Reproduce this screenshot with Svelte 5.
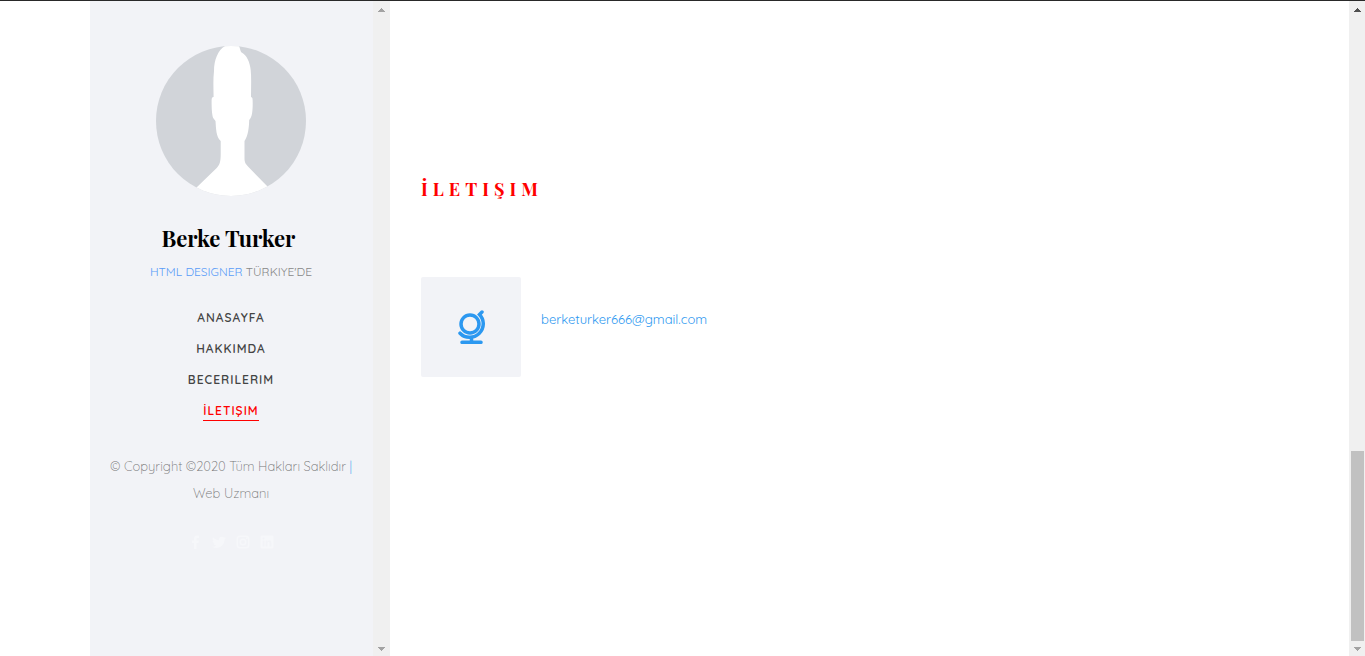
<script>
  const menu = [
    { label: 'ANASAYFA', href: '#home' },
    { label: 'HAKKIMDA', href: '#about' },
    { label: 'BECERILERIM', href: '#skills' },
    { label: 'İLETIŞIM', href: '#contact' }
  ];

  const socials = [
    { name: 'Facebook', path: 'M8.5 14V8h2l.4-2.4H8.500V4.200c0-.8.3-1.300 1.300-1.300H11V.7C10.700.6 10 .5 9.200.5 7.300.5 6 1.600 6 3.700v1.900H4V8h2v6z' },
    { name: 'Twitter', path: 'M14 3c-.5.200-1.100.4-1.600.4.6-.3 1-.9 1.200-1.500-.5.300-1.100.5-1.800.7A2.900 2.900 0 0 0 6.900 5.200C4.500 5.100 2.400 3.900 1 2.200c-.8 1.300-.4 3 .9 3.800-.5 0-.9-.1-1.300-.3 0 1.400 1 2.500 2.300 2.800-.4.1-.9.1-1.300 0 .4 1.100 1.400 2 2.700 2A5.800 5.800 0 0 1 0 11.700c5.500 3.400 12.500-.3 12.500-7.100.6-.4 1.100-1 1.500-1.600z' },
    { name: 'Instagram', path: 'M4 .5h6A3.500 3.500 0 0 1 13.500 4v6a3.500 3.500 0 0 1-3.500 3.500H4A3.500 3.500 0 0 1 .5 10V4A3.500 3.500 0 0 1 4 .5zM4 2a2 2 0 0 0-2 2v6c0 1.100.9 2 2 2h6a2 2 0 0 0 2-2V4a2 2 0 0 0-2-2zM7 3.500a3.500 3.500 0 1 1 0 7 3.500 3.500 0 0 1 0-7zM7 5a2 2 0 1 0 0 4 2 2 0 0 0 0-4zM10.700 2.500a.8.8 0 1 1 0 1.600.8.8 0 0 1 0-1.600z' },
    { name: 'LinkedIn', path: 'M1.500.5h11l1 1v11l-1 1h-11l-1-1v-11zM2.600 5.500v6h1.900v-6zM3.500 2.500a1.100 1.100 0 1 0 0 2.200 1.100 1.100 0 0 0 0-2.200zM5.600 5.500v6h1.900V8.300c0-1.600 2-1.700 2 0v3.200h1.900V7.800c0-2.900-3-3-3.900-1.400v-.9z' }
  ];

  let active = $state('#contact');
</script>

{#snippet scrollbar(page)}
  {@const viewBox = page ? '0 0 16 17' : '0 0 17 17'}
  <div class="scrollbar" class:page aria-hidden="true">
    <svg class="arrow up" {viewBox}><path d="M5 11h7v-1h-1V9h-1V8H9V7H8v1H7v1H6v1H5z" /></svg>
    {#if page}
      <div class="thumb"></div>
    {/if}
    <svg class="arrow" {viewBox}><path d="M5 8h7v1h-1v1h-1v1H9v1H8v-1H7v-1H6V9H5z" /></svg>
  </div>
{/snippet}

<div class="layout">
  <aside class="sidebar">
    <div class="sidebar-content">
      <svg class="avatar" viewBox="0 0 150 150" role="img" aria-label="Berke Turker">
        <clipPath id="round"><circle cx="75" cy="75" r="75" /></clipPath>
        <g clip-path="url(#round)">
          <path fill="#d1d4d9" d="M0 0h150v150H0z" />
          <path fill="#fff" d="M69 0C62 4 58 14 58 25c-1 9-.5 17-.4 26-2-.5-2 2-2 5 0 6 .4 13 1.600 16l2.300 3C60 82 60 91 64.700 95v13c0 8-1 10.500-4 14L40 142v8h72v-9L92.500 121c-4-4-4-6-4-10V95C92 90 93 82 93.200 74c3-3 3.500-9 3.500-17 0-4 0-6-1.700-6 0-9 .5-19-.3-27-1-8-4-15-9-17.500C84.500 6 84 2 83 0z" />
        </g>
      </svg>
      <h1>Berke Turker&nbsp;</h1>
      <p class="position"><a href="#home">HTML DESIGNER</a> TÜRKIYE'DE</p>

      <nav>
        {#each menu as item}
          <a href={item.href} class:active={active === item.href} onclick={() => (active = item.href)}>{item.label}</a>
        {/each}
      </nav>

      <p class="copyright">© Copyright ©2020 Tüm Hakları Saklıdır <a href="#home">|</a> Web Uzmanı</p>

      <div class="socials">
        {#each socials as social}
          <a href="#contact" aria-label={social.name}>
            <svg viewBox="0 0 14 14"><path fill-rule="evenodd" d={social.path} /></svg>
          </a>
        {/each}
      </div>
    </div>
    {@render scrollbar(false)}
  </aside>

  <main>
    <h2>İLETIŞIM</h2>
    <div class="contact">
      <div class="contact-icon">
        <svg viewBox="-1 0 28 34">
          <circle cx="12" cy="14" r="9" />
          <path d="M24 2l-2.500 2.500A13.500 13.500 0 1 1 2 23.200M13.500 28v4M4 32.300h19" />
        </svg>
      </div>
      <a href="mailto:berketurker666@gmail.com">berketurker666@gmail.com</a>
    </div>
  </main>
  {@render scrollbar(true)}
</div>

<style>
  :global(body) {
    background: #fff;
  }

  .layout {
    display: flex;
    box-sizing: border-box;
    min-height: 100vh;
    padding-left: 90px;
    border-top: 1px solid #292929;
    font-family: Quicksand, Lato, sans-serif;
    font-size: 13px;
  }

  a {
    color: #2c98f0;
    text-decoration: none;
  }

  .sidebar {
    display: flex;
    flex: 0 0 300px;
    background: #f2f3f7;
  }

  .sidebar-content {
    display: flex;
    flex: 1;
    flex-direction: column;
    align-items: center;
    box-sizing: border-box;
    padding: 45px 17px 32px 16px;
    text-align: center;
  }

  .avatar {
    width: 150px;
    height: 150px;
  }

  h1 {
    margin: 24px 0 0;
    font: 700 22px/36px 'Playfair Display', 'Liberation Serif', serif;
    color: #000;
  }

  .position {
    margin: 5px 0 0;
    font-size: 12px;
    font-weight: 400;
    line-height: 22px;
    color: #888;
  }

  .position a {
    color: #5a9cf8;
  }

  nav {
    display: flex;
    flex-direction: column;
    align-items: center;
    gap: 12px;
    margin-top: 26px;
  }

  nav a {
    font-size: 12px;
    font-weight: 600;
    line-height: 18px;
    letter-spacing: 1px;
    border-bottom: 1px solid transparent;
    color: #444;
  }

  nav a.active {
    border-bottom: 1px solid #f00;
    color: #f00;
  }

  .copyright {
    margin: 32px 0 0;
    font-weight: 300;
    line-height: 27px;
    color: #777;
  }

  .socials {
    display: flex;
    gap: 10px;
    margin-top: 28px;
  }

  .socials svg {
    display: block;
    width: 14px;
    height: 14px;
    fill: #f6f7fa;
  }

  main {
    flex: 1;
    padding: 174px 31px 32px;
  }

  h2 {
    margin: 0;
    font: 700 18px/28px 'Playfair Display', 'Liberation Serif', serif;
    letter-spacing: 5px;
    color: #f00;
  }

  .contact {
    display: flex;
    gap: 20px;
    margin-top: 74px;
  }

  .contact a {
    margin-top: 30px;
    line-height: 24px;
  }

  .contact-icon {
    display: flex;
    align-items: center;
    justify-content: center;
    width: 100px;
    height: 100px;
    border-radius: 2px;
    background: #f2f3f7;
  }

  .contact-icon svg {
    width: 28px;
    height: 34px;
    fill: none;
    stroke: #2c98f0;
    stroke-width: 3.500;
    stroke-linecap: round;
  }

  .scrollbar {
    display: flex;
    flex: 0 0 17px;
    flex-direction: column;
    justify-content: space-between;
    background: #f0f0f0;
  }

  .scrollbar.page {
    flex-basis: 16px;
  }

  .arrow {
    width: 17px;
    height: 17px;
    fill: #a3a3a3;
    shape-rendering: crispEdges;
  }

  .page .arrow {
    width: 16px;
  }

  .page .up {
    fill: #505050;
  }

  .thumb {
    height: 29vh;
    margin: auto 1px -2px 2px;
    background: #c1c1c1;
  }
</style>
